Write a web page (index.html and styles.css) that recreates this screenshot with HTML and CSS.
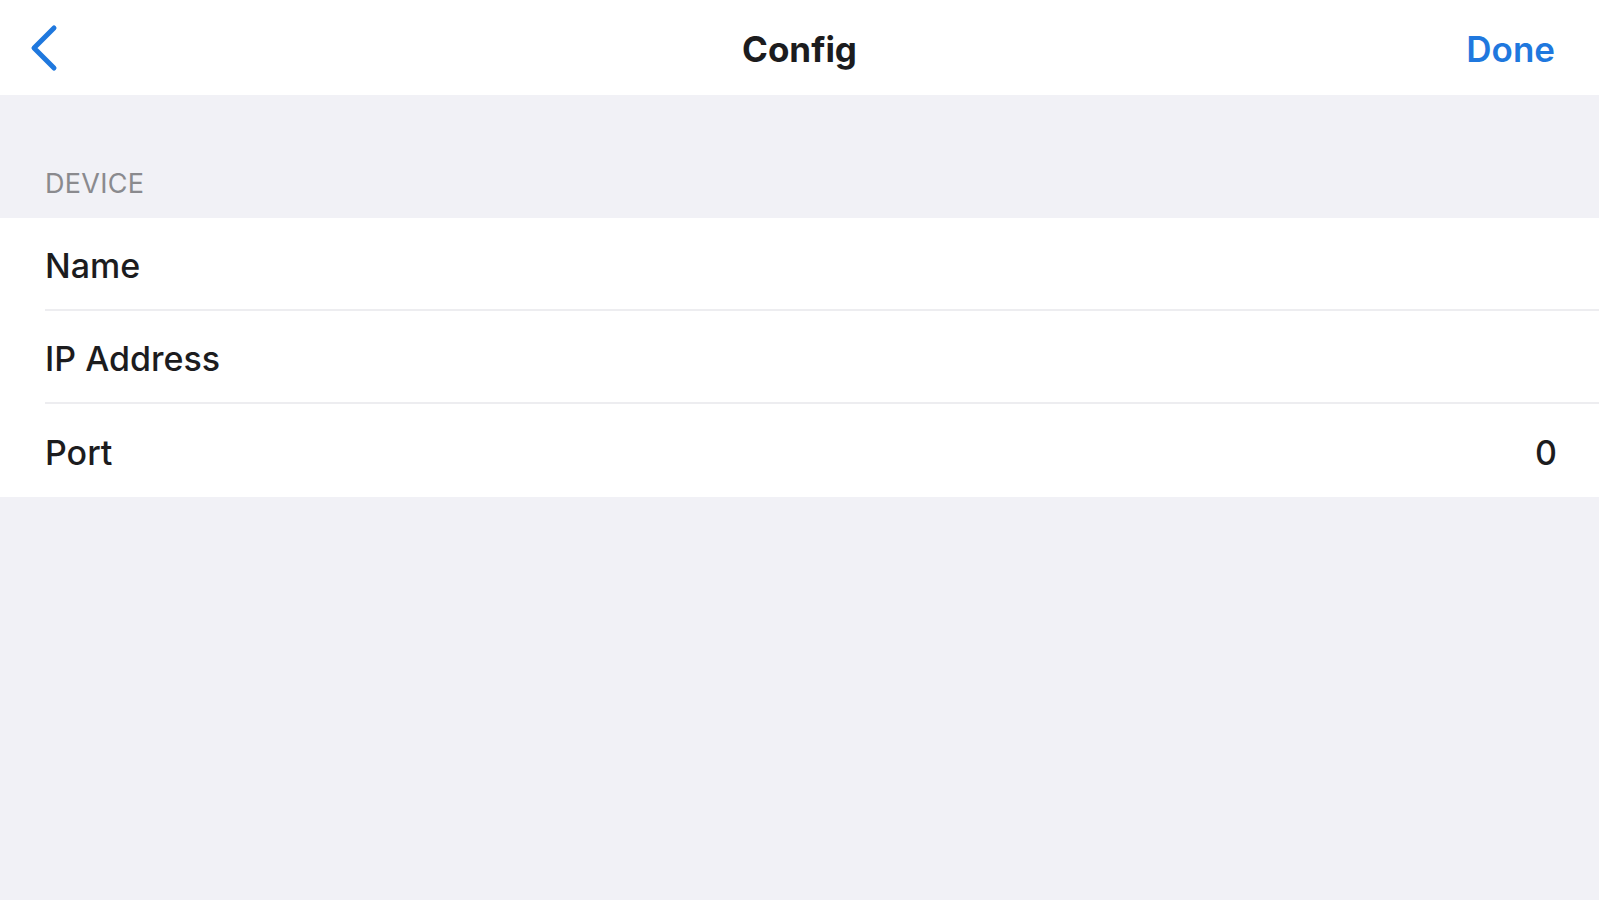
FILE: index.html
```html
<!DOCTYPE html>
<html>
<head>
<meta charset="utf-8">
<link rel="stylesheet" href="styles.css">
</head>
<body>
<header class="navbar">
  <div class="nav-left">
    <svg class="back" width="32" height="50" viewBox="0 0 32 50"><path d="M26 5 L6 25 L26 45" fill="none" stroke="#1f78de" stroke-width="5" stroke-linecap="round" stroke-linejoin="round"/></svg>
  </div>
  <div class="nav-title">Config</div>
  <div class="nav-right">Done</div>
</header>
<main class="content">
  <div class="section-header">DEVICE</div>
  <div class="group">
    <div class="row"><span class="label">Name</span><span class="value"></span></div>
    <div class="row"><span class="label">IP Address</span><span class="value"></span></div>
    <div class="row"><span class="label">Port</span><span class="value">0</span></div>
  </div>
</main>
</body>
</html>
```
FILE: styles.css
```css
html, body {
  margin: 0;
  padding: 0;
  height: 100%;
}
body {
  background: #f1f1f6;
  font-family: Inter, "Liberation Sans", sans-serif;
  color: #1c1c1e;
}
.navbar {
  height: 95px;
  background: #ffffff;
  display: grid;
  grid-template-columns: 1fr auto 1fr;
  align-items: center;
  padding: 0 28px;
  box-sizing: border-box;
}
.nav-left {
  display: flex;
  align-items: center;
}
.back {
  display: block;
}
.nav-title {
  font-size: 35px;
  font-weight: 700;
  color: #1c1c1e;
  padding-top: 2px;
}
.nav-right {
  text-align: right;
  font-size: 35px;
  font-weight: 600;
  color: #1f78de;
  padding-right: 16px;
  padding-top: 2px;
}
.section-header {
  padding: 73px 45px 18px;
  font-size: 27px;
  color: #8a8a8e;
  letter-spacing: 0.3px;
  line-height: 32px;
}
.group {
  background: #ffffff;
}
.row {
  height: 93px;
  margin-left: 45px;
  padding-right: 42px;
  padding-top: 3px;
  display: flex;
  align-items: center;
  justify-content: space-between;
  border-bottom: 2px solid #ededf0;
  box-sizing: border-box;
  font-size: 34px;
  font-weight: 500;
}
.row:last-child {
  border-bottom: none;
}
.value {
  color: #1c1c1e;
}
```
